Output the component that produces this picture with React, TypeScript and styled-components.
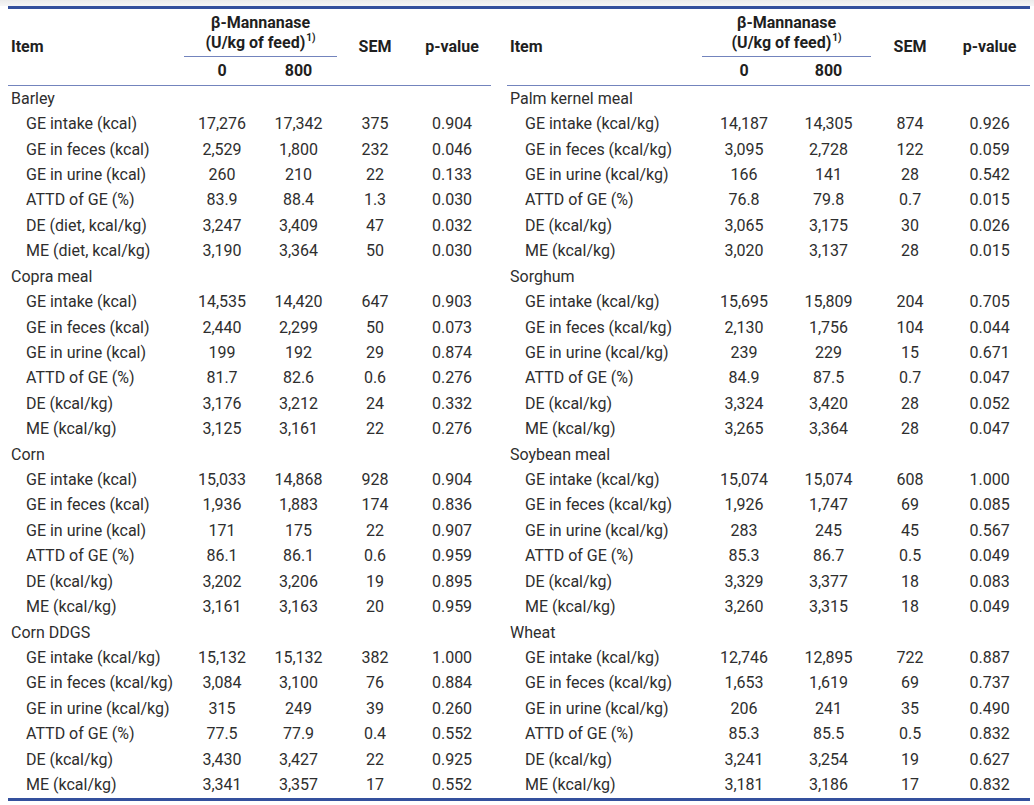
import React from 'react';
import styled, { createGlobalStyle } from 'styled-components';

// =============================================================================
// Data
// =============================================================================

type Values = [string, string, string, string];

interface Group {
  name: string;
  rows: [string, ...Values][];
}

const leftGroups: Group[] = [
  {
    name: 'Barley',
    rows: [
      ['GE intake (kcal)', '17,276', '17,342', '375', '0.904'],
      ['GE in feces (kcal)', '2,529', '1,800', '232', '0.046'],
      ['GE in urine (kcal)', '260', '210', '22', '0.133'],
      ['ATTD of GE (%)', '83.9', '88.4', '1.3', '0.030'],
      ['DE (diet, kcal/kg)', '3,247', '3,409', '47', '0.032'],
      ['ME (diet, kcal/kg)', '3,190', '3,364', '50', '0.030'],
    ],
  },
  {
    name: 'Copra meal',
    rows: [
      ['GE intake (kcal)', '14,535', '14,420', '647', '0.903'],
      ['GE in feces (kcal)', '2,440', '2,299', '50', '0.073'],
      ['GE in urine (kcal)', '199', '192', '29', '0.874'],
      ['ATTD of GE (%)', '81.7', '82.6', '0.6', '0.276'],
      ['DE (kcal/kg)', '3,176', '3,212', '24', '0.332'],
      ['ME (kcal/kg)', '3,125', '3,161', '22', '0.276'],
    ],
  },
  {
    name: 'Corn',
    rows: [
      ['GE intake (kcal)', '15,033', '14,868', '928', '0.904'],
      ['GE in feces (kcal)', '1,936', '1,883', '174', '0.836'],
      ['GE in urine (kcal)', '171', '175', '22', '0.907'],
      ['ATTD of GE (%)', '86.1', '86.1', '0.6', '0.959'],
      ['DE (kcal/kg)', '3,202', '3,206', '19', '0.895'],
      ['ME (kcal/kg)', '3,161', '3,163', '20', '0.959'],
    ],
  },
  {
    name: 'Corn DDGS',
    rows: [
      ['GE intake (kcal/kg)', '15,132', '15,132', '382', '1.000'],
      ['GE in feces (kcal/kg)', '3,084', '3,100', '76', '0.884'],
      ['GE in urine (kcal/kg)', '315', '249', '39', '0.260'],
      ['ATTD of GE (%)', '77.5', '77.9', '0.4', '0.552'],
      ['DE (kcal/kg)', '3,430', '3,427', '22', '0.925'],
      ['ME (kcal/kg)', '3,341', '3,357', '17', '0.552'],
    ],
  },
];

const rightGroups: Group[] = [
  {
    name: 'Palm kernel meal',
    rows: [
      ['GE intake (kcal/kg)', '14,187', '14,305', '874', '0.926'],
      ['GE in feces (kcal/kg)', '3,095', '2,728', '122', '0.059'],
      ['GE in urine (kcal/kg)', '166', '141', '28', '0.542'],
      ['ATTD of GE (%)', '76.8', '79.8', '0.7', '0.015'],
      ['DE (kcal/kg)', '3,065', '3,175', '30', '0.026'],
      ['ME (kcal/kg)', '3,020', '3,137', '28', '0.015'],
    ],
  },
  {
    name: 'Sorghum',
    rows: [
      ['GE intake (kcal/kg)', '15,695', '15,809', '204', '0.705'],
      ['GE in feces (kcal/kg)', '2,130', '1,756', '104', '0.044'],
      ['GE in urine (kcal/kg)', '239', '229', '15', '0.671'],
      ['ATTD of GE (%)', '84.9', '87.5', '0.7', '0.047'],
      ['DE (kcal/kg)', '3,324', '3,420', '28', '0.052'],
      ['ME (kcal/kg)', '3,265', '3,364', '28', '0.047'],
    ],
  },
  {
    name: 'Soybean meal',
    rows: [
      ['GE intake (kcal/kg)', '15,074', '15,074', '608', '1.000'],
      ['GE in feces (kcal/kg)', '1,926', '1,747', '69', '0.085'],
      ['GE in urine (kcal/kg)', '283', '245', '45', '0.567'],
      ['ATTD of GE (%)', '85.3', '86.7', '0.5', '0.049'],
      ['DE (kcal/kg)', '3,329', '3,377', '18', '0.083'],
      ['ME (kcal/kg)', '3,260', '3,315', '18', '0.049'],
    ],
  },
  {
    name: 'Wheat',
    rows: [
      ['GE intake (kcal/kg)', '12,746', '12,895', '722', '0.887'],
      ['GE in feces (kcal/kg)', '1,653', '1,619', '69', '0.737'],
      ['GE in urine (kcal/kg)', '206', '241', '35', '0.490'],
      ['ATTD of GE (%)', '85.3', '85.5', '0.5', '0.832'],
      ['DE (kcal/kg)', '3,241', '3,254', '19', '0.627'],
      ['ME (kcal/kg)', '3,181', '3,186', '17', '0.832'],
    ],
  },
];

type FlatRow = { label: string } | { item: string; values: Values };

const flatten = (groups: Group[]): FlatRow[] =>
  groups.flatMap((g) => [
    { label: g.name } as FlatRow,
    ...g.rows.map(([item, ...values]) => ({ item, values: values as Values })),
  ]);

// column widths: item, 0, 800, SEM, p-value | gap | item, 0, 800, SEM, p-value
const colWidths = [176, 76, 77, 76, 78, 16, 195, 84, 85, 78, 81];

// =============================================================================
// Styled Components
// =============================================================================

const GlobalStyle = createGlobalStyle`
  html, body {
    margin: 0;
    padding: 0;
    background: #fff;
  }
  body {
    font-family: Roboto, "Liberation Sans", sans-serif;
  }
`;

const Page = styled.div`
  width: 1034px;
  height: 805px;
  overflow: hidden;
  background: linear-gradient(#ebebeb 0, #f6f6f6 6px, #fff 6px);
  padding-top: 6px;
  box-sizing: border-box;
`;

const Table = styled.table`
  margin-left: 8px;
  width: 1022px;
  table-layout: fixed;
  border-collapse: separate;
  border-spacing: 0;
  border-top: 3px solid #34509d;
  border-bottom: 3px solid #34509d;
  color: #2e2e2e;
  font-size: 16px;
`;

const Col = styled.col<{ $w: number }>`
  width: ${(p) => p.$w}px;
`;

const HeadRow = styled.tr<{ $h: number }>`
  height: ${(p) => p.$h}px;
`;

const HeadCell = styled.th<{ $left?: boolean; $rule?: boolean }>`
  font-weight: 700;
  color: #1f1f1f;
  text-align: ${(p) => (p.$left ? 'left' : 'center')};
  padding: 0 0 0 ${(p) => (p.$left ? '3px' : '0')};
  vertical-align: middle;
  line-height: 20px;
  border-bottom: ${(p) => (p.$rule ? '1px solid #7384bd' : 'none')};
`;

const GroupHead = styled(HeadCell)`
  vertical-align: bottom;
  padding-bottom: 3px;
`;

const Sup = styled.sup`
  font-size: 10px;
  line-height: 0;
  vertical-align: 7px;
  margin-left: 1px;
`;

const Row = styled.tr`
  height: 25.43px;
`;

const ItemCell = styled.td<{ $indent?: boolean }>`
  padding: 0 0 0 ${(p) => (p.$indent ? '18px' : '3px')};
  white-space: nowrap;
  line-height: 24px;
`;

const NumCell = styled.td`
  text-align: center;
  padding: 0;
  line-height: 24px;
`;

const Spacer = styled.td`
  padding: 0;
`;

// =============================================================================
// Components
// =============================================================================

const HalfHead = () => (
  <>
    <HeadCell $left rowSpan={2} $rule>
      Item
    </HeadCell>
    <GroupHead colSpan={2} $rule>
      β-Mannanase
      <br />
      (U/kg of feed)<Sup>1)</Sup>
    </GroupHead>
    <HeadCell rowSpan={2} $rule>
      SEM
    </HeadCell>
    <HeadCell rowSpan={2} $rule>
      p-value
    </HeadCell>
  </>
);

const HalfRow = ({ row }: { row: FlatRow }) =>
  'label' in row ? (
    <>
      <ItemCell>{row.label}</ItemCell>
      <NumCell />
      <NumCell />
      <NumCell />
      <NumCell />
    </>
  ) : (
    <>
      <ItemCell $indent>{row.item}</ItemCell>
      {row.values.map((v, i) => (
        <NumCell key={i}>{v}</NumCell>
      ))}
    </>
  );

const App = () => {
  const left = flatten(leftGroups);
  const right = flatten(rightGroups);

  return (
    <Page>
      <GlobalStyle />
      <Table>
        <colgroup>
          {colWidths.map((w, i) => (
            <Col key={i} $w={w} />
          ))}
        </colgroup>
        <thead>
          <HeadRow $h={48}>
            <HalfHead />
            <Spacer rowSpan={2} />
            <HalfHead />
          </HeadRow>
          <HeadRow $h={29}>
            <HeadCell $rule>0</HeadCell>
            <HeadCell $rule>800</HeadCell>
            <HeadCell $rule>0</HeadCell>
            <HeadCell $rule>800</HeadCell>
          </HeadRow>
        </thead>
        <tbody>
          {left.map((row, i) => (
            <Row key={i}>
              <HalfRow row={row} />
              <Spacer />
              <HalfRow row={right[i]} />
            </Row>
          ))}
        </tbody>
      </Table>
    </Page>
  );
};

export default App;
